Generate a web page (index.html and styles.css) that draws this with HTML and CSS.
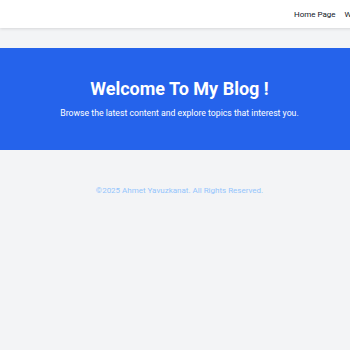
FILE: index.html
```html
<!DOCTYPE html>
<html lang="en">
<head>
<meta charset="utf-8">
<title>My Blog</title>
<link rel="stylesheet" href="styles.css">
</head>
<body>
<div class="page">
  <header class="site-header">
    <div class="brand"></div>
    <nav class="nav">
      <a href="#" class="nav-link">Home Page</a>
      <a href="#" class="nav-link">Write</a>
      <a href="#" class="nav-link">About</a>
    </nav>
  </header>
  <main class="main">
    <section class="hero">
      <h1 class="hero-title">Welcome To My Blog !</h1>
      <p class="hero-sub">Browse the latest content and explore topics that interest you.</p>
    </section>
  </main>
  <footer class="footer">
    <p class="footer-text">©2025 Ahmet Yavuzkanat. All Rights Reserved.</p>
  </footer>
</div>
</body>
</html>
```
FILE: styles.css
```css
* { box-sizing: border-box; }
html, body { margin: 0; padding: 0; }
body {
  background: #f3f4f6;
  font-family: Roboto, "Noto Sans", sans-serif;
  color: #111827;
  overflow: hidden;
}
.page { width: 359px; }
.site-header {
  background: #fff;
  height: 28px;
  display: flex;
  align-items: center;
  box-shadow: 0 1px 3px rgba(0,0,0,0.12);
  white-space: nowrap;
  overflow: hidden;
}
.brand { flex: 0 0 294px; }
.nav { display: flex; gap: 9px; flex-shrink: 0; }
.nav-link {
  color: #111827;
  text-decoration: none;
  font-size: 8px;
}
.main { padding-top: 20px; }
.hero {
  background: #2563eb;
  color: #fff;
  text-align: center;
  height: 102px;
  padding-top: 31px;
}
.hero-title {
  margin: 0;
  font-size: 18px;
  font-weight: 700;
  line-height: 20px;
}
.hero-sub {
  margin: 8px 0 0;
  font-size: 8.7px;
  line-height: 12px;
}
.footer { padding-top: 36px; text-align: center; }
.footer-text {
  margin: 0;
  font-size: 8px;
  color: #93c5fd;
}
```
